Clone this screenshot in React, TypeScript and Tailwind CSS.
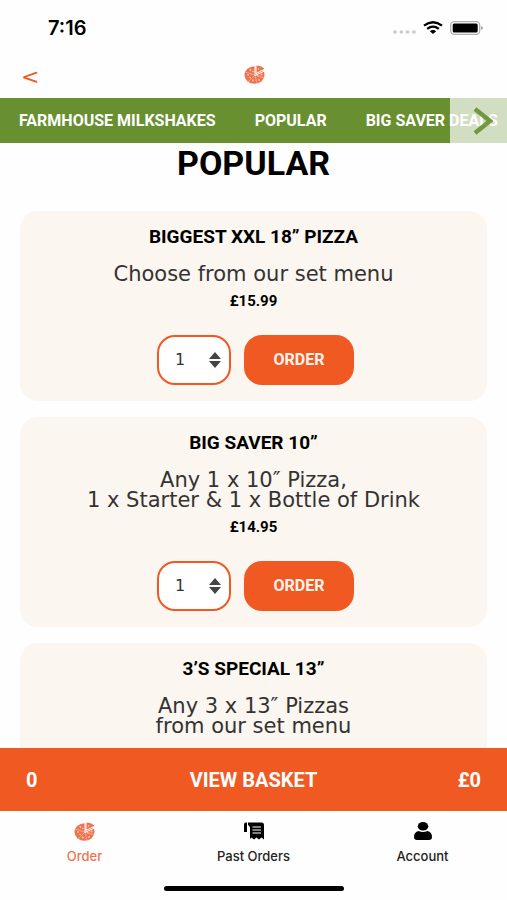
import React, { useState } from 'react';

interface IDeal {
  id: string;
  title: string;
  lines: string[];
  price: string;
}

const deals: IDeal[] = [
  { id: 'xxl', title: 'BIGGEST XXL 18” PIZZA', lines: ['Choose from our set menu'], price: '£15.99' },
  { id: 'saver', title: 'BIG SAVER 10”', lines: ['Any 1 x 10″ Pizza,', '1 x Starter & 1 x Bottle of Drink'], price: '£14.95' },
  { id: 'threes', title: '3’S SPECIAL 13”', lines: ['Any 3 x 13″ Pizzas', 'from our set menu'], price: '' },
];

const categories = ['FARMHOUSE MILKSHAKES', 'POPULAR', 'BIG SAVER DEALS'];

const PizzaIcon = () => (
  <svg width="22" height="19" viewBox="0 0 44 38" aria-hidden="true">
    <ellipse cx="21" cy="20" rx="20" ry="17.5" fill="#ee7450" />
    <path d="M24 17V0c8 0 14 3 18 8z" fill="#ee7450" stroke="#fff" strokeWidth="2" />
    <path d="M22 1v20L43 11" stroke="#fff" strokeWidth="2" fill="none" />
    <path d="M22 20L2 14M22 20L8 34M22 20l4 18M22 20l20 6" stroke="#fbd8ca" strokeWidth="1" fill="none" />
    <g fill="#f9c9b6">
      <circle cx="13" cy="10" r="1.8" />
      <circle cx="8" cy="20" r="1.8" />
      <circle cx="12" cy="25" r="1.5" />
      <circle cx="18" cy="31" r="1.8" />
      <circle cx="30" cy="30" r="1.8" />
      <circle cx="35" cy="19" r="1.8" />
      <circle cx="29" cy="8" r="1.6" />
      <circle cx="18" cy="13" r="1.4" />
      <circle cx="28" cy="22" r="1.4" />
    </g>
  </svg>
);

const ReceiptIcon = () => (
  <svg width="20" height="18" viewBox="0 0 40 36" aria-hidden="true">
    <path d="M0 5q0-4 4-4h2v19H0z" fill="#000" />
    <path d="M8 1h27q5 0 5 5v29l-5-4-5 4-5-4-5 4-5-4-3 3V12q0-4-4-6z" fill="#000" />
    <path d="M17 10h17M17 16h17M17 22h17" stroke="#fff" strokeWidth="2.4" />
  </svg>
);

const PersonIcon = () => (
  <svg width="18" height="18" viewBox="0 0 36 36" aria-hidden="true">
    <ellipse cx="18" cy="8.5" rx="10.5" ry="8.5" fill="#000" />
    <path d="M9 18q9 4 18 0 9 2 9 12 0 6-6 6H6q-6 0-6-6 0-10 9-12z" fill="#000" />
  </svg>
);

const StatusBar = () => (
  <div className="flex h-[55px] shrink-0 items-center justify-between pl-12 pr-6">
    <span className="font-[Inter,sans-serif] text-xl leading-7 font-semibold text-black">7:16</span>
    <div className="flex items-center gap-[7px]">
      <svg width="23" height="4" viewBox="0 0 23 4" className="mt-2" aria-hidden="true">
        <g fill="#c8c8c8">
          <circle cx="2" cy="2" r="1.8" />
          <circle cx="8.3" cy="2" r="1.8" />
          <circle cx="14.6" cy="2" r="1.8" />
          <circle cx="20.9" cy="2" r="1.8" />
        </g>
      </svg>
      <svg width="20" height="13" viewBox="0 0 20 13" aria-hidden="true">
        <path d="M1 4.6Q10-2.2 19 4.6M4.2 7.8Q10 3.4 15.8 7.8" stroke="#000" strokeWidth="2.3" fill="none" />
        <path d="M6.8 10.2Q10 8 13.2 10.2L10 13z" fill="#000" />
      </svg>
      <svg width="33" height="14" viewBox="0 0 33 14" aria-hidden="true">
        <rect x="0.7" y="0.7" width="29" height="12.6" rx="3.5" fill="none" stroke="#b0b0b0" strokeWidth="1.3" />
        <rect x="2.7" y="2.5" width="25" height="9" rx="1.5" fill="#000" />
        <path d="M31.2 5q1.6.4 1.6 2t-1.6 2z" fill="#999" />
      </svg>
    </div>
  </div>
);

const DealCard: React.FC<{ deal: IDeal; onOrder: (quantity: number) => void }> = ({ deal, onOrder }) => {
  const [quantity, setQuantity] = useState('1');

  return (
    <article className="rounded-[18px] bg-[#fbf6ef] px-4 pb-4 pt-3 text-center">
      <h2 className="text-[19px] leading-7 font-bold text-black">{deal.title}</h2>
      <p className="mt-[13px] font-['DejaVu_Sans',sans-serif] text-[21px] leading-5 text-[#333]">
        {deal.lines.map((line) => (
          <span key={line} className="block">{line}</span>
        ))}
      </p>
      {deal.price && <p className="mt-[7px] text-[15px] leading-5 font-bold text-black">{deal.price}</p>}
      <div className="mt-6 flex justify-center gap-[13px] pl-1">
        <div className="relative">
          <select
            name={`quantity-${deal.id}`}
            aria-label="Quantity"
            value={quantity}
            onChange={(e) => setQuantity(e.target.value)}
            className="h-[50px] w-[74px] appearance-none rounded-[18px] border-2 border-[#f05a22] bg-white pl-4 font-['DejaVu_Sans',sans-serif] text-base text-[#333]"
          >
            {[1, 2, 3, 4, 5].map((n) => (
              <option key={n} value={n}>{n}</option>
            ))}
          </select>
          <svg width="12" height="16" viewBox="0 0 12 16" className="pointer-events-none absolute right-[10px] top-[17px]" aria-hidden="true">
            <path d="M6 0l6 7H0zM6 16l6-7H0z" fill="#444" />
          </svg>
        </div>
        <button
          type="button"
          onClick={() => onOrder(Number(quantity))}
          className="h-[50px] w-[110px] rounded-[18px] bg-[#f05a22] text-base font-bold text-[#fdf3ea]"
        >
          ORDER
        </button>
      </div>
    </article>
  );
};

export default function App() {
  const [count, setCount] = useState(0);

  return (
    <div className="flex h-screen flex-col bg-[#fefefe] font-[Roboto,sans-serif]">
      <StatusBar />

      <header className="grid h-[43px] shrink-0 grid-cols-3 items-center px-[21px]">
        <button type="button" aria-label="Back" className="justify-self-start font-['DejaVu_Sans',sans-serif] text-[22px] leading-7 text-[#f05a22]">
          &lt;
        </button>
        <div className="justify-self-center pb-1 pl-[3px]">
          <PizzaIcon />
        </div>
      </header>

      {/* Category strip */}
      <nav className="relative h-[45px] shrink-0 overflow-hidden bg-[#688f30]">
        <div className="absolute inset-y-0 right-0 w-[57px] bg-white/70" />
        <div className="relative flex h-full items-center gap-[39px] pl-[19px]">
          {categories.map((name) => (
            <a key={name} href="#" className="whitespace-nowrap text-base font-bold text-white">{name}</a>
          ))}
        </div>
        <button type="button" aria-label="More categories" className="absolute inset-y-0 right-0 flex w-[57px] items-center justify-center pl-2">
          <svg width="20" height="28" viewBox="0 0 20 28" aria-hidden="true">
            <path d="M2 2l15 12L2 26" stroke="#688f30" strokeOpacity="0.9" strokeWidth="4.5" fill="none" />
          </svg>
        </button>
      </nav>

      <main className="min-h-0 flex-1 overflow-y-auto px-5 [scrollbar-width:none]">
        <h1 className="pb-7 text-center text-[34px] leading-10 font-bold text-black">POPULAR</h1>
        <div className="space-y-4">
          {deals.map((deal) => (
            <DealCard key={deal.id} deal={deal} onOrder={(quantity) => setCount(count + quantity)} />
          ))}
        </div>
      </main>

      <button type="button" className="grid h-[63px] shrink-0 grid-cols-3 items-center bg-[#f05a22] px-[26px] text-xl font-bold text-white">
        <span className="text-left">{count}</span>
        <span>VIEW BASKET</span>
        <span className="text-right">£0</span>
      </button>

      {/* Bottom tabs */}
      <footer className="shrink-0 pb-[9px]">
        <nav className="grid h-[75px] grid-cols-3 pt-[11px] font-[Inter,sans-serif] text-[13px] leading-4 font-medium">
          <a href="#" className="flex flex-col items-center gap-[7px] text-[#ee7450]">
            <PizzaIcon />
            Order
          </a>
          <a href="#" className="flex flex-col items-center gap-2 text-[#222]">
            <ReceiptIcon />
            Past Orders
          </a>
          <a href="#" className="flex flex-col items-center gap-2 text-[#222]">
            <PersonIcon />
            Account
          </a>
        </nav>
        <div className="mx-auto h-[5px] w-[180px] rounded-full bg-black" />
      </footer>
    </div>
  );
}
